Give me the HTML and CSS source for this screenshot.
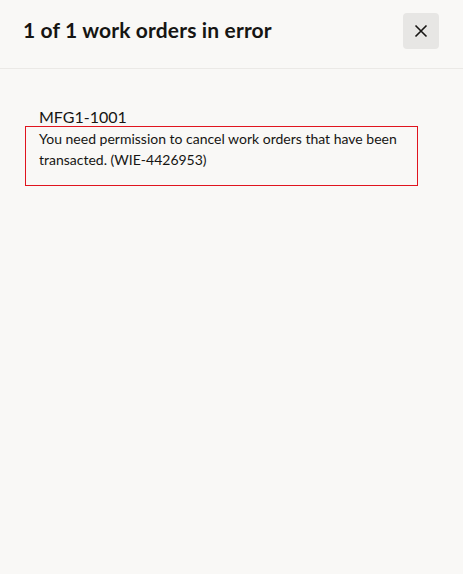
FILE: index.html
```html
<!DOCTYPE html>
<html lang="en">
<head>
<meta charset="utf-8">
<title>Work orders in error</title>
<link rel="stylesheet" href="styles.css">
</head>
<body>
<div class="dialog">
  <header class="dialog-header">
    <h1 class="dialog-title">1 of 1 work orders in error</h1>
    <button class="close-btn" aria-label="Close">
      <svg width="14" height="14" viewBox="0 0 14 14" aria-hidden="true">
        <path d="M1.5 1.5 L12.5 12.5 M12.5 1.5 L1.5 12.5" stroke="#161513" stroke-width="1.6" fill="none"/>
      </svg>
    </button>
  </header>
  <main class="dialog-body">
    <div class="error-item">
      <div class="order-number">MFG1-1001</div>
      <div class="error-box">You need permission to cancel work orders that have been transacted. (WIE-4426953)</div>
    </div>
  </main>
</div>
</body>
</html>
```
FILE: styles.css
```css
html, body {
  margin: 0;
  padding: 0;
  background: #f9f8f6;
}
body {
  font-family: Lato, "Noto Sans", "Liberation Sans", sans-serif;
  color: #161513;
  width: 463px;
  height: 574px;
}
.dialog-header {
  display: flex;
  align-items: center;
  justify-content: space-between;
  height: 69px;
  box-sizing: border-box;
  padding: 0 24px 0 23px;
  border-bottom: 1px solid #ebe9e6;
}
.dialog-title {
  margin: 0;
  font-size: 21px;
  font-weight: 700;
  line-height: 24px;
  letter-spacing: 0.15px;
  margin-top: -8px;
}
.close-btn {
  width: 36px;
  height: 36px;
  border: none;
  border-radius: 4px;
  background: #e7e6e4;
  display: flex;
  align-items: center;
  justify-content: center;
  padding: 0;
  margin-top: -7px;
}
.dialog-body {
  padding: 38px 45px 0 25px;
}
.order-number {
  font-size: 16px;
  line-height: 19px;
  padding-left: 14px;
}
.error-box {
  border: 1px solid rgb(224, 20, 30);
  font-size: 14px;
  line-height: 21px;
  padding: 1px 14px 15px 13px;
}
```
